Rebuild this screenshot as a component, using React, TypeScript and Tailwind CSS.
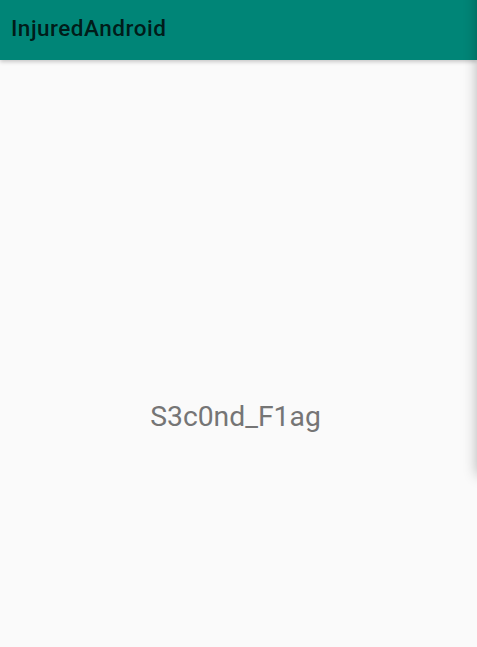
import React from 'react';

const App = () => {
    return (
        <div
            className="relative w-[477px] h-[647px] overflow-hidden bg-[#fafafa] flex flex-col"
            style={{ fontFamily: 'Roboto, "Noto Sans", sans-serif' }}
        >
            {/* Toolbar */}
            <div className="h-[60px] bg-[#008577] flex items-center px-[11px] pb-[4px] shadow-[0_2px_4px_rgba(0,0,0,0.2)] z-10">
                <h1 className="text-[22.5px] font-medium tracking-[0.5px] text-black/80 leading-none">
                    InjuredAndroid
                </h1>
            </div>

            {/* Content */}
            <div className="flex-1 flex justify-center pt-[341px] pr-[6px]">
                <span className="text-[28.3px] leading-[32px] text-[#757575]">S3c0nd_F1ag</span>
            </div>

            {/* panel sitting just off the right edge, casting its shadow */}
            <div className="absolute left-[477px] top-[-20px] w-[40px] h-[495px] bg-[#fafafa] shadow-[0_0_14px_rgba(0,0,0,0.28)] z-20" />
        </div>
    );
};

export default App;
